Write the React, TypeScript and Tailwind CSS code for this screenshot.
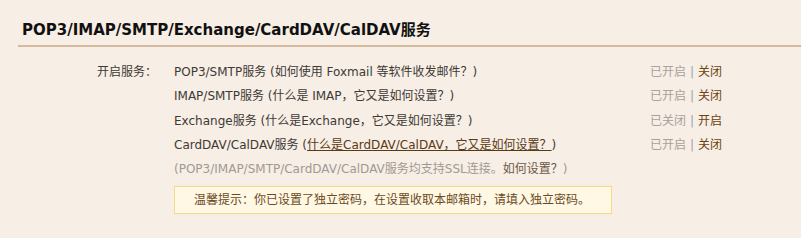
import React from "react";

const font = { fontFamily: '"DejaVu Sans", Verdana, "Noto Sans CJK SC", sans-serif' };

function Status({ on }: { on: boolean }) {
  return (
    <span className="whitespace-nowrap">
      <span className="text-[#a8a29c]">{on ? "已开启" : "已关闭"}</span>
      <span className="text-[#9aa7b8] mx-[4px]">|</span>
      <span className="text-[#6b4210]">{on ? "关闭" : "开启"}</span>
    </span>
  );
}

export default function App() {
  const rows: { main: React.ReactNode; on: boolean }[] = [
    { main: <>POP3/SMTP服务 <span>(如何使用 Foxmail 等软件收发邮件？)</span></>, on: true },
    { main: <>IMAP/SMTP服务 <span>(什么是 IMAP，它又是如何设置？)</span></>, on: true },
    { main: <>Exchange服务 <span>(什么是Exchange，它又是如何设置？)</span></>, on: false },
    {
      main: (
        <>
          CardDAV/CalDAV服务 (<span className="underline text-[#5a3a14]">什么是CardDAV/CalDAV，它又是如何设置？</span>)
        </>
      ),
      on: true,
    },
  ];
  return (
    <div className="w-[801px] h-[238px] bg-[#f7eee5] overflow-hidden text-[12px]" style={font}>
      <div className="pl-[18px] pt-[21px]">
        <div className="pl-[4px] h-[24px] font-bold text-[15px] leading-[18px] text-[#111]">
          POP3/IMAP/SMTP/Exchange/CardDAV/CalDAV服务
        </div>
        <div className="h-[2px] bg-[#d4bb9f]" />
      </div>
      <div className="flex pt-[13px]">
        <div className="w-[174px] pl-[97px] text-[#3d3a36] leading-[24px]">开启服务：</div>
        <div className="w-[548px] text-[#3d3a36]">
          {rows.map((r, i) => (
            <div key={i} className="flex justify-between h-[24.3px] leading-[24px]">
              <span>{r.main}</span>
              <Status on={r.on} />
            </div>
          ))}
          <div className="h-[24.3px] leading-[24px] text-[#a09a94]">
            (POP3/IMAP/SMTP/CardDAV/CalDAV服务均支持SSL连接。<span className="text-[#6b5a48]">如何设置？</span>)
          </div>
          <div className="mt-[5px] w-[438px] h-[28px] border border-[#f5d98a] bg-[#fff8e4] pl-[19px] leading-[26px] text-[#6b4a1f]">
            温馨提示：你已设置了独立密码，在设置收取本邮箱时，请填入独立密码。
          </div>
        </div>
      </div>
    </div>
  );
}
